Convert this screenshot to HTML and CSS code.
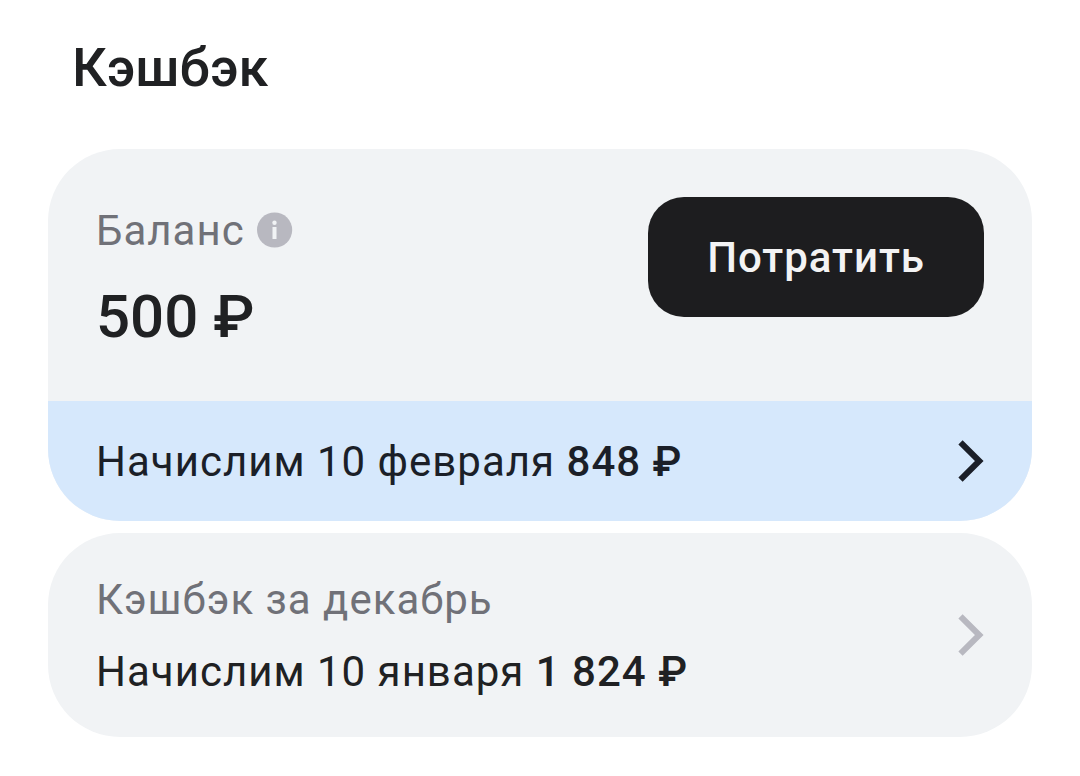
FILE: index.html
```html
<!DOCTYPE html>
<html lang="ru">
<head>
<meta charset="utf-8">
<meta name="viewport" content="width=device-width, initial-scale=1">
<title>Кэшбэк</title>
<link rel="stylesheet" href="styles.css">
</head>
<body>
<main class="page">
  <h1 class="title">Кэшбэк</h1>
  <section class="card">
    <div class="summary">
      <div class="balance">
        <div class="balance-label">
          <span class="text muted">Баланс</span>
          <button class="info" type="button" aria-label="Подробнее о балансе">
            <svg viewBox="0 0 36 36" width="36" height="36" aria-hidden="true"><circle cx="17.6" cy="18" r="17.6" fill="#b8b8c0"/><circle cx="17.5" cy="10.7" r="2.2" fill="#f1f3f5"/><path d="M15.5 15h4v12h-4z" fill="#f1f3f5"/></svg>
          </button>
        </div>
        <strong class="amount">500 ₽</strong>
      </div>
      <button class="spend" type="button">Потратить</button>
    </div>
    <a class="row row-accent" href="#february">
      <span class="text">Начислим 10 февраля <b>848 ₽</b></span>
      <svg class="chevron" viewBox="0 0 26 42" width="26" height="42" aria-hidden="true"><path d="M2.5 2.3 21.3 21 2.5 39.7"/></svg>
    </a>
  </section>
  <a class="card row row-month" href="#december">
    <span class="month">
      <span class="text muted">Кэшбэк за декабрь</span>
      <span class="text">Начислим 10 января <b>1 824 ₽</b></span>
    </span>
    <svg class="chevron" viewBox="0 0 26 42" width="26" height="42" aria-hidden="true"><path d="M2.5 2.3 21.3 21 2.5 39.7"/></svg>
  </a>
</main>
</body>
</html>
```
FILE: styles.css
```css
* { box-sizing: border-box; }

body {
  margin: 0;
  background: #fff;
  color: #202123;
  font-family: Roboto, "Noto Sans", sans-serif;
  font-size: 42px;
  line-height: 46px;
  letter-spacing: 1px;
}

.page {
  display: flex;
  flex-direction: column;
  gap: 12px;
  padding: 36px 48px;
}

.title {
  margin: 0;
  padding: 0 24px 37px;
  font-size: 54px;
  line-height: 64px;
  font-weight: 500;
  letter-spacing: 0;
}

.card {
  overflow: hidden;
  border-radius: 72px;
  background: #f1f3f5;
}

.text { padding-top: 2px; }

.summary {
  display: flex;
  justify-content: space-between;
  align-items: flex-start;
  padding: 48px;
}

.balance {
  display: flex;
  flex-direction: column;
  gap: 33px;
  padding: 9px 0 6px;
}

.balance-label {
  display: flex;
  align-items: center;
  gap: 12px;
}

.info {
  display: flex;
  padding: 0;
  border: 0;
  background: none;
}

.amount {
  font-size: 60px;
  line-height: 60px;
  font-weight: 500;
  letter-spacing: 0;
}

.spend {
  padding: 38px 59px 36px;
  border: 0;
  border-radius: 36px;
  background: #1d1d1f;
  color: #f3f3f4;
  font: inherit;
  font-weight: 500;
  letter-spacing: 1px;
}

.row {
  display: flex;
  justify-content: space-between;
  align-items: center;
  padding: 36px 48px;
  color: #202123;
  text-decoration: none;
}

.row-accent {
  background: #d6e8fc;
  color: #1b1f28;
}

.month {
  display: flex;
  flex-direction: column;
  gap: 24px;
  padding: 6px 0;
}

.muted { color: #707178; }

b { font-weight: 500; }

.chevron {
  flex: none;
  fill: none;
  stroke: #1b1f28;
  stroke-width: 6;
}

.row-month .chevron { stroke: #b8b8c0; }
```
